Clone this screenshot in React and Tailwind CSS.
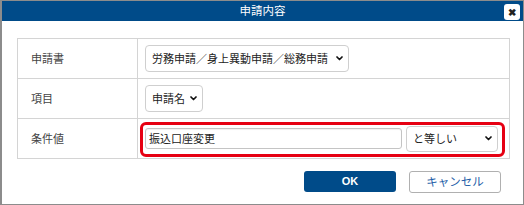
import React from "react";

const font = { fontFamily: '"Noto Sans CJK JP", "Noto Sans", sans-serif' };

function Chevron() {
  return (
    <svg width="7" height="5" viewBox="0 0 7 5" className="shrink-0">
      <path d="M1 1 L3.5 3.5 L6 1" fill="none" stroke="#111" strokeWidth="1.7" strokeLinecap="round" strokeLinejoin="round" />
    </svg>
  );
}

function Select({ text, className }) {
  return (
    <div className={"flex items-center justify-between rounded-[4px] border border-[#cfcfcf] bg-white pl-[6px] pr-[5px] text-[11px] text-[#222] " + className}>
      <span className="leading-none">{text}</span>
      <Chevron />
    </div>
  );
}

export default function App() {
  return (
    <div className="w-[524px] h-[205px] border border-l-2 border-[#8c8c8c] bg-white flex flex-col" style={font}>
      <div className="h-[20px] bg-[#004b89] relative flex items-center justify-center">
        <span className="text-white text-[11.5px] leading-none">申請内容</span>
        <div className="absolute right-[3px] top-[3px] w-[16px] h-[16px] rounded-[3px] bg-white flex items-center justify-center">
          <span className="text-[#222] text-[10px] leading-none font-bold">✖</span>
        </div>
      </div>
      <div className="pl-[15px] pt-[17px]">
        <div className="w-[493px] border-l border-t border-[#d4d4d4] text-[11px] text-[#444]">
          <div className="flex h-[40px] border-b border-[#d4d4d4]">
            <div className="w-[120px] border-r border-[#d4d4d4] pl-[13px] flex items-center">申請書</div>
            <div className="w-[372px] border-r border-[#d4d4d4] pl-[7px] flex items-center">
              <Select text="労務申請／身上異動申請／総務申請" className="w-[204px] h-[27px]" />
            </div>
          </div>
          <div className="flex h-[40px] border-b border-[#d4d4d4]">
            <div className="w-[120px] border-r border-[#d4d4d4] pl-[13px] flex items-center">項目</div>
            <div className="w-[372px] border-r border-[#d4d4d4] pl-[7px] flex items-center">
              <Select text="申請名" className="w-[58px] h-[27px]" />
            </div>
          </div>
          <div className="flex h-[40px] border-b border-[#d4d4d4]">
            <div className="w-[120px] border-r border-[#d4d4d4] pl-[13px] flex items-center">条件値</div>
            <div className="w-[372px] border-r border-[#d4d4d4] pl-[7px] flex items-center gap-[4px] relative">
              <div className="w-[257px] h-[21px] rounded-[3px] border border-[#c4c4c4] bg-white flex items-center pl-[3px] text-[11px] text-[#222] shadow-[inset_0_1px_1px_rgba(0,0,0,0.06)]">
                振込口座変更
              </div>
              <Select text="と等しい" className="w-[92px] h-[26px]" />
              <div className="absolute left-[2px] top-[3px] right-[4px] bottom-[1px] border-[3px] border-[#e60012] rounded-[6px] pointer-events-none" />
            </div>
          </div>
        </div>
      </div>
      <div className="flex justify-end gap-[13px] pr-[22px] pt-[12px]">
        <div className="w-[92px] h-[21px] rounded-[3px] bg-[#004b89] flex items-center justify-center text-white text-[11px] font-bold" style={{ fontFamily: '"Liberation Sans", Arial, sans-serif' }}>
          OK
        </div>
        <div className="w-[92px] h-[22px] rounded-[3px] border border-[#b0b0b0] bg-white flex items-center justify-center text-[#1f5fa8] text-[11.5px]">
          キャンセル
        </div>
      </div>
    </div>
  );
}
